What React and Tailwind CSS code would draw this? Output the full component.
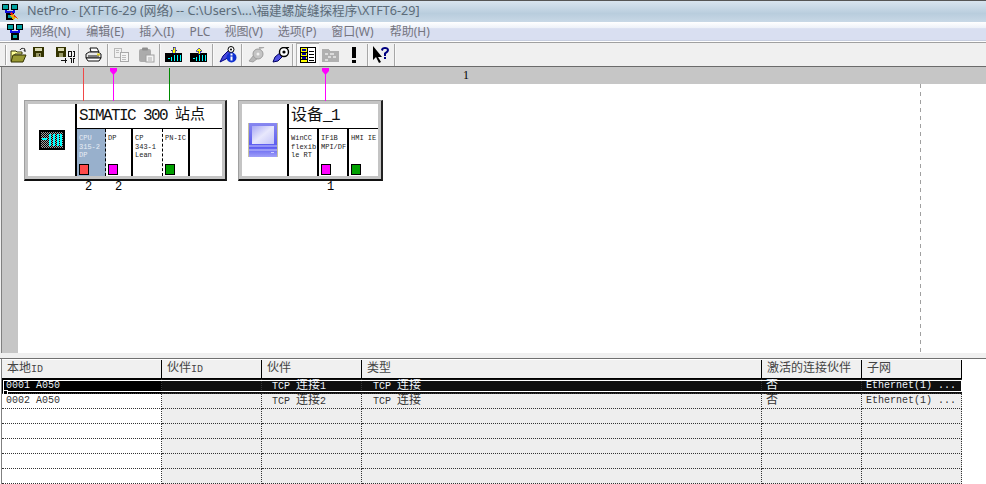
import React from "react";

const MONO = "font-['Liberation_Mono','Noto_Sans_CJK_SC',monospace]";
const UI = "font-['Noto_Sans','Noto_Sans_CJK_SC',sans-serif]";

function NetIcon({ spark }) {
  return (
    <svg width="17" height="16" viewBox="0 0 17 16" shapeRendering="crispEdges">
      <path d="M4 6v2M12 6v2M3 8h10M8 8v2" stroke="#1010e0" strokeWidth="1.4" fill="none" />
      <rect x="0.5" y="0.5" width="6" height="5" fill="#00a0a0" stroke="#000" strokeWidth="1.4" />
      <rect x="9.5" y="0.5" width="6" height="5" fill="#00a0a0" stroke="#000" strokeWidth="1.4" />
      <rect x="5" y="10" width="6" height="5" fill="#00a0a0" stroke="#000" strokeWidth="1.4" />
      {spark && (
        <g>
          <path d="M10 8l6 7-3-1-2 2-1-3-2-1z" fill="#e8b010" />
          <path d="M12 10l3 4-3-1z" fill="#e02020" />
          <path d="M9 9l2 2" stroke="#e02020" strokeWidth="1.5" />
        </g>
      )}
    </svg>
  );
}

const OpenIcon = () => (
  <svg width="17" height="16" viewBox="0 0 17 16">
    <path d="M1 4h5l1 1h5v2H5L2 14H1z" fill="#ffff99" stroke="#333300" />
    <path d="M3 8h13l-3 7H1z" fill="#999933" stroke="#333300" />
    <path d="M10 3c1-2 3-2 5-1l-1 2 2 0" fill="none" stroke="#222" strokeWidth="1" />
  </svg>
);

const SaveIcon = () => (
  <svg width="11" height="10" viewBox="0 0 11 10" shapeRendering="crispEdges">
    <rect width="11" height="10" fill="#333300" />
    <rect x="2" y="1" width="7" height="3" fill="#d8d8b0" />
    <rect x="3" y="6" width="5" height="4" fill="#999966" />
    <rect x="6" y="7" width="1" height="2" fill="#222" />
  </svg>
);

const SaveCompileIcon = () => (
  <svg width="19" height="16" viewBox="0 0 19 16" shapeRendering="crispEdges">
    <rect width="10" height="10" fill="#333300" />
    <rect x="2" y="1" width="6" height="3" fill="#d8d8b0" />
    <rect x="3" y="6" width="4" height="4" fill="#999966" />
    <path d="M12 4h3v5h-3zM17 4h1v5h-1M5 13h6M9 11v5M14 11h1v5M17 11h2v5h-2z" fill="none" stroke="#111" />
  </svg>
);

const PrintIcon = () => (
  <svg width="17" height="15" viewBox="0 0 17 15">
    <path d="M5 1h7l2 4H6z" fill="#fff" stroke="#111" />
    <path d="M1 7l3-2h9l3 2v4H1z" fill="#e8e8e8" stroke="#111" />
    <path d="M1 11l2 3h11l2-3z" fill="#fff" stroke="#111" />
    <path d="M3 9h11" stroke="#111" />
    <rect x="12" y="6.5" width="3" height="2" fill="#e0d020" />
  </svg>
);

const CopyIcon = () => (
  <svg width="16" height="15" viewBox="0 0 16 15" shapeRendering="crispEdges">
    <path d="M1 1h7v9H1z" fill="#f0f0f0" stroke="#b8b8b8" />
    <path d="M7 5h8v9H7z" fill="#f4f4f4" stroke="#a8a8a8" />
    <path d="M3 3h3M3 5h3M9 8h4M9 10h4M9 12h4" stroke="#bdbdbd" />
  </svg>
);

const PasteIcon = () => (
  <svg width="17" height="16" viewBox="0 0 17 16">
    <rect x="1" y="2" width="12" height="13" rx="2" fill="#acacac" />
    <rect x="4" y="0.5" width="6" height="3" rx="1" fill="#8f8f8f" />
    <rect x="8" y="8" width="8" height="7" fill="#f2f2f2" stroke="#a0a0a0" />
    <path d="M10 11h4M10 13h4" stroke="#b0b0b0" />
  </svg>
);

function StationIcon({ up }) {
  return (
    <svg width="17" height="15" viewBox="0 0 17 15" shapeRendering="crispEdges">
      <rect y="6" width="17" height="9" fill="#000" />
      <path d="M6 10v4M9 8v6M12 8v6M15 8v6" stroke="#00ffff" />
      <path d="M3 11h2" stroke="#00ffff" />
      <path d={up ? "M9 1l-3 3h2v3h2V4h2z" : "M8 0h2v3h2L9 7 6 3h2z"} fill="#ffff00" stroke="#0000a0" strokeWidth="0.6" />
    </svg>
  );
}

const DiagIcon = () => (
  <svg width="18" height="17" viewBox="0 0 18 17">
    <path d="M1 16l3-6 7-7 3 3-7 7z" fill="#4848d8" stroke="#000080" />
    <circle cx="12" cy="3.5" r="3" fill="#fff" stroke="#000" />
    <circle cx="12" cy="3.5" r="1" fill="#000" />
    <circle cx="12.5" cy="11.5" r="5" fill="#1030d0" />
    <rect x="11.5" y="7.5" width="2" height="2" fill="#fff" />
    <rect x="11.5" y="10.5" width="2" height="4" fill="#fff" />
  </svg>
);

const KeyDisabled = () => (
  <svg width="17" height="16" viewBox="0 0 17 16">
    <path d="M1 14l5-6 4 3-5 4z" fill="#b8b8b8" stroke="#a0a0a0" />
    <circle cx="10" cy="7" r="5" fill="#c4c4c4" stroke="#9c9c9c" />
    <path d="M11 1l5-1" stroke="#a8a8a8" strokeWidth="2" />
    <circle cx="10" cy="7" r="1.5" fill="#f0f0f0" />
  </svg>
);

const ToolIcon = () => (
  <svg width="18" height="16" viewBox="0 0 18 16">
    <path d="M1 15l2-5 6-5 3 3-6 6z" fill="#5050e0" stroke="#000060" />
    <circle cx="12" cy="5" r="4.5" fill="#fff" stroke="#000" strokeWidth="1.4" />
    <circle cx="12" cy="5" r="1.6" fill="#000" />
    <path d="M14 1l3-1" stroke="#000" strokeWidth="1.5" />
  </svg>
);

const TableIcon = () => (
  <svg width="16" height="16" viewBox="0 0 16 16" shapeRendering="crispEdges">
    <rect x="0.5" y="0.5" width="15" height="15" fill="#fff" stroke="#000" />
    <rect x="1" y="1" width="6" height="14" fill="#ffff00" />
    <path d="M7.5 0v16M1 5.5h6M1 9.5h6M1 12.5h6M9 4h5M9 7h5M9 10h5M9 13h5" stroke="#000" />
    <path d="M2 3h4M2 7h4M2 11h4" stroke="#0000a0" strokeWidth="2" />
  </svg>
);

const FolderDisabled = () => (
  <svg width="17" height="16" viewBox="0 0 17 16" shapeRendering="crispEdges">
    <path d="M0 2h7l1 2h9v11H0z" fill="#b0b0b0" />
    <path d="M3 6h3v2H3zM8 6h4v2H8zM6 9h3v2H6zM11 9h3v2h-3zM3 12h3v2H3z" fill="#dcdcdc" />
  </svg>
);

const HelpIcon = () => (
  <svg width="17" height="17" viewBox="0 0 17 17">
    <path d="M0 0v14l3-3 3 6 2-1-3-5h4z" fill="#000" />
    <path d="M8 4c0-2 2-3 4-3s4 1 4 3-2 3-3 4v2h-2V7c1-1 3-2 3-3s-1-1-2-1-2 0-2 2zM11 11h2v2h-2z" fill="#000080" />
  </svg>
);

function Sep() {
  return <div className="w-[2px] h-[22px] shrink-0 border-l border-[#a6a6a6] bg-[#f8f8f8]" />;
}

function Btn({ className, children }) {
  return <div className={"flex items-center justify-center h-[23px] shrink-0 " + className}>{children}</div>;
}

function Toolbar() {
  return (
    <div className="flex items-center h-[23px] bg-[#f0f0f0] pl-[5px]">
      <div className="w-[2px] h-[20px] border-l border-[#a6a6a6] bg-white shrink-0" />
      <Btn className="w-[22px]"><OpenIcon /></Btn>
      <Btn className="w-[18px] pb-[5px]"><SaveIcon /></Btn>
      <Btn className="w-[31px] pl-[6px]"><SaveCompileIcon /></Btn>
      <Sep />
      <Btn className="w-[27px]"><PrintIcon /></Btn>
      <Sep />
      <Btn className="w-[24px]"><CopyIcon /></Btn>
      <Btn className="w-[26px]"><PasteIcon /></Btn>
      <Sep />
      <Btn className="w-[24px]"><StationIcon /></Btn>
      <Btn className="w-[27px]"><StationIcon up /></Btn>
      <Sep />
      <Btn className="w-[27px]"><DiagIcon /></Btn>
      <Sep />
      <Btn className="w-[26px]"><KeyDisabled /></Btn>
      <Btn className="w-[23px]"><ToolIcon /></Btn>
      <Sep />
      <div className="w-[2px] shrink-0" />
      <Btn className="w-[23px] bg-[#f9f9f9] border-l border-t border-[#b0b0b0]"><TableIcon /></Btn>
      <Btn className="w-[22px]"><FolderDisabled /></Btn>
      <Btn className="w-[26px]">
        <span className="block w-[4px] h-[16px] relative">
          <span className="block w-[4px] h-[11px] bg-black" />
          <span className="block w-[4px] h-[3px] bg-black mt-[2px]" />
        </span>
      </Btn>
      <Sep />
      <Btn className="w-[25px]"><HelpIcon /></Btn>
      <Sep />
    </div>
  );
}

function Menu() {
  const items = [
    ["网络(N)", "ml-[7px]"],
    ["编辑(E)", "ml-[16px]"],
    ["插入(I)", "ml-[15px]"],
    ["PLC", "ml-[15px]"],
    ["视图(V)", "ml-[14px]"],
    ["选项(P)", "ml-[15px]"],
    ["窗口(W)", "ml-[15px]"],
    ["帮助(H)", "ml-[16px]"],
  ];
  return (
    <div className="flex items-center h-[19px] bg-[linear-gradient(#ffffff_0%,#eef2f9_30%,#d9dff1_35%,#d9dff1_95%,#b4bccd_100%)] pl-[7px]">
      <div className="w-[16px] h-[16px]"><NetIcon /></div>
      {items.map(([t, m]) => (
        <span key={t} className={`${m} ${UI} text-[12px] leading-[19px] text-[#75757f] whitespace-nowrap`}>{t}</span>
      ))}
    </div>
  );
}

function Stem({ className, arrow }) {
  return (
    <div className={"absolute top-[-33px] h-[33px] w-px " + className}>
      {arrow && (
        <svg className="absolute top-0 left-[-3px]" width="7" height="7" viewBox="0 0 7 7">
          <path d="M0 0h7v3L3.5 7 0 3z" fill="#ff00ff" />
        </svg>
      )}
    </div>
  );
}

function RackIcon() {
  return (
    <svg width="26" height="20" viewBox="0 0 26 20" shapeRendering="crispEdges">
      <defs>
        <pattern id="chk" width="2" height="2" patternUnits="userSpaceOnUse">
          <rect width="2" height="2" fill="#000" />
          <rect width="1" height="1" fill="#a0a0a0" />
          <rect x="1" y="1" width="1" height="1" fill="#a0a0a0" />
        </pattern>
      </defs>
      <rect width="26" height="20" fill="#000" />
      <rect x="2" y="2" width="22" height="16" fill="url(#chk)" />
      <path d="M3 9h5" stroke="#00ffff" strokeWidth="2" />
      <path d="M10.5 4v12M14.5 4v12M18.5 4v12M22 4v12" stroke="#00ffff" strokeWidth="2" />
    </svg>
  );
}

function MonitorIcon() {
  return (
    <svg width="30" height="34" viewBox="0 0 30 34">
      <defs>
        <linearGradient id="scr" x1="0" y1="0" x2="1" y2="1">
          <stop offset="0" stopColor="#a8a8f4" />
          <stop offset="0.5" stopColor="#e8e8fc" />
          <stop offset="1" stopColor="#c4c4f8" />
        </linearGradient>
        <linearGradient id="bd" x1="0" y1="0" x2="0" y2="1">
          <stop offset="0" stopColor="#8888f0" />
          <stop offset="0.7" stopColor="#5a5af0" />
          <stop offset="1" stopColor="#a0a0f8" />
        </linearGradient>
      </defs>
      <rect x="0" y="0" width="30" height="34" fill="#c8c4a0" />
      <rect x="1" y="0" width="28" height="34" fill="url(#bd)" />
      <rect x="4" y="3" width="22" height="18" fill="url(#scr)" />
      <path d="M1 23h28M1 27h28" stroke="#c8c8fc" />
      <rect x="23" y="29" width="3" height="1" fill="#d0d0ff" />
    </svg>
  );
}

function Slot({ className, text, square, textClass = "text-[#222]" }) {
  return (
    <div className={"relative shrink-0 h-full pt-[5px] pl-[2px] " + className}>
      <div className={`${MONO} text-[7px] leading-[8.5px] whitespace-pre ${textClass}`}>{text}</div>
      {square && <div className={"absolute bottom-[1px] left-[2px] w-[10px] h-[11px] border border-black " + square} />}
    </div>
  );
}

function StationFrame({ className, icon, iconWidth, children, stems }) {
  return (
    <div className={"relative shrink-0 h-[81px] bg-[#c4c4c4] border-t border-l border-[#a0a0a0] border-r-2 border-b-2 border-r-[#222] border-b-[#111] p-[3px] " + className}>
      {stems}
      <div className="flex h-full bg-white">
        <div className={"flex items-center justify-center shrink-0 border-r-2 border-black " + iconWidth}>{icon}</div>
        <div className="flex flex-col flex-1 min-w-0">{children}</div>
      </div>
    </div>
  );
}

function Title({ children }) {
  return (
    <div className="h-[25px] flex items-center border-b border-black pl-[2px] text-[#111] whitespace-pre">{children}</div>
  );
}

function Canvas() {
  return (
    <div className="relative flex flex-col h-[286px] bg-[#c6c6c6] border-l border-[#808080] ml-px overflow-hidden">
      <div className="relative h-[17px] shrink-0">
        <span className="absolute left-[461px] top-[1px] font-['Liberation_Serif',serif] text-[12px] leading-[15px] text-black">1</span>
      </div>
      <div className="flex-1 ml-[16px] bg-white relative pt-[16px] pl-[6px] flex gap-[11px] items-start">
        <div className="absolute left-[902px] top-0 bottom-0 w-px bg-[repeating-linear-gradient(#a0a0a0_0,#a0a0a0_4px,transparent_4px,transparent_8px)]" />
        <div className="flex flex-col shrink-0">
          <StationFrame
            className="w-[203px]"
            iconWidth="w-[49px]"
            icon={<RackIcon />}
            stems={
              <>
                <Stem className="left-[58px] bg-[#f04848]" />
                <Stem className="left-[88px] bg-[#ff00ff]" arrow />
                <Stem className="left-[144px] bg-[#008a00]" />
              </>
            }
          >
            <Title>
              <span className={`${MONO} text-[16px] tracking-[-1.6px]`}>SIMATIC 300 </span>
              <span className={`${MONO} text-[15px]`}>站点</span>
            </Title>
            <div className="flex flex-1 min-h-0">
              <Slot className="w-[29px] bg-[#98b0cc] border-r border-dashed border-black" text={"CPU\n315-2\nDP"} square="bg-[#ff4a4a]" textClass="text-[#e8eef6]" />
              <Slot className="w-[27px] border-r-2 border-black" text="DP" square="bg-[#ff00ff]" />
              <Slot className="w-[30px] border-r border-dashed border-black" text={"CP\n343-1\nLean"} />
              <Slot className="w-[27px] border-r-2 border-black" text="PN-IC" square="bg-[#00a000]" />
            </div>
          </StationFrame>
          <div className={`flex h-[12px] items-center ${MONO} text-[12px] leading-[12px] text-black`}>
            <span className="ml-[61px] w-[30px]">2</span>
            <span>2</span>
          </div>
        </div>
        <div className="flex flex-col shrink-0">
          <StationFrame
            className="w-[145px]"
            iconWidth="w-[47px] pr-[3px]"
            icon={<MonitorIcon />}
            stems={<Stem className="left-[86px] bg-[#ff00ff]" arrow />}
          >
            <Title>
              <span className={`${MONO} text-[16px]`}>设备</span>
              <span className={`${MONO} text-[16px] tracking-[-1.6px]`}>_1</span>
            </Title>
            <div className="flex flex-1 min-h-0">
              <Slot className="w-[30px] border-r-2 border-black" text={"WinCC\nflexib\nle RT"} />
              <Slot className="w-[30px] border-r-2 border-black" text={"IF1B\nMPI/DF"} square="bg-[#ff00ff]" />
              <Slot className="w-[28px]" text="HMI IE" square="bg-[#00a000]" />
            </div>
          </StationFrame>
          <div className={`h-[12px] pl-[89px] flex items-center ${MONO} text-[12px] leading-[12px] text-black`}>1</div>
        </div>
      </div>
    </div>
  );
}

function Mixed({ text, big = "text-[12px]", leading }) {
  const parts = text.split(/([\u4e00-\u9fff]+)/);
  return (
    <div className={`${MONO} text-[10px] whitespace-pre ${leading}`}>
      {parts.map((p, i) =>
        /[\u4e00-\u9fff]/.test(p) ? <span key={i} className={big}>{p}</span> : <span key={i}>{p}</span>
      )}
    </div>
  );
}

const COLS = "grid grid-cols-[160px_100px_100px_400px_100px_100px] w-[960px]";

function Header() {
  const h = ["本地ID", "伙伴ID", "伙伴", "类型", "激活的连接伙伴", "子网"];
  return (
    <div className={COLS + " h-[19px] border-b border-black"}>
      {h.map((t) => (
        <div key={t} className="bg-[#f0f0f0] border-r border-black pl-[5px] pt-[2px] text-[#444] overflow-hidden">
          <Mixed text={t} leading="leading-[15px]" />
        </div>
      ))}
    </div>
  );
}

function Row({ cells, selected }) {
  const pads = ["pl-[4px]", "pl-[4px]", "pl-[10px]", "pl-[11px]", "pl-[4px]", "pl-[4px]"];
  return (
    <div className={COLS + " h-[15px] relative"}>
      {pads.map((p, i) => {
        const bg = selected ? (i === 0 ? "bg-black" : "bg-[#0f0f0f]") : i === 0 ? "bg-white" : "bg-[#eeeeee]";
        const color = selected ? "text-[#eef4fa]" : "text-[#333]";
        return (
          <div key={i} className={`${bg} ${color} ${p} pt-[2px] border-r border-b border-dotted border-[#333] overflow-hidden`}>
            <Mixed text={cells[i] || ""} leading="leading-[10px]" />
          </div>
        );
      })}
      {selected && <div className="absolute left-[1px] top-[1px] right-0 bottom-[2px] border border-white pointer-events-none" />}
      {selected && <div className="absolute left-[1px] top-[11px] w-[5px] h-[5px] bg-black border border-white" />}
    </div>
  );
}

function Table() {
  return (
    <div className="flex-1 border-t border-[#707070] pt-px pl-[2px] border-l-0 bg-white relative">
      <div className="absolute left-[1px] top-0 bottom-0 w-px bg-[#808080]" />
      <Header />
      <Row selected cells={["0001 A050", "", "TCP 连接1", "TCP 连接", "否", "Ethernet(1) ..."]} />
      <Row cells={["0002 A050", "", "TCP 连接2", "TCP 连接", "否", "Ethernet(1) ..."]} />
      <Row cells={[]} />
      <Row cells={[]} />
      <Row cells={[]} />
      <Row cells={[]} />
      <Row cells={[]} />
    </div>
  );
}

export default function App() {
  return (
    <div className="w-[986px] h-[484px] overflow-hidden flex flex-col bg-[#f0f0f0]">
      <div className="h-[22px] border-t border-[#555] flex items-center pl-[2px] bg-[linear-gradient(#d8e4ef_0%,#b9cddd_60%,#c8d8e6_100%)] shrink-0">
        <NetIcon spark />
        <span className={`ml-[8px] ${UI} text-[12.6px] text-[#5c6b78] whitespace-nowrap`}>
          NetPro - [XTFT6-29 (网络) -- C:\Users\...\福建螺旋缝探程序\XTFT6-29]
        </span>
      </div>
      <div className="shrink-0"><Menu /></div>
      <div className="h-[2px] shrink-0 bg-white border-b border-[#a0a0a0]" />
      <div className="shrink-0"><Toolbar /></div>
      <div className="h-px shrink-0 bg-[#6b6b6b]" />
      <Canvas />
      <div className="h-[5px] shrink-0 bg-[#f0f0f0]" />
      <Table />
    </div>
  );
}
